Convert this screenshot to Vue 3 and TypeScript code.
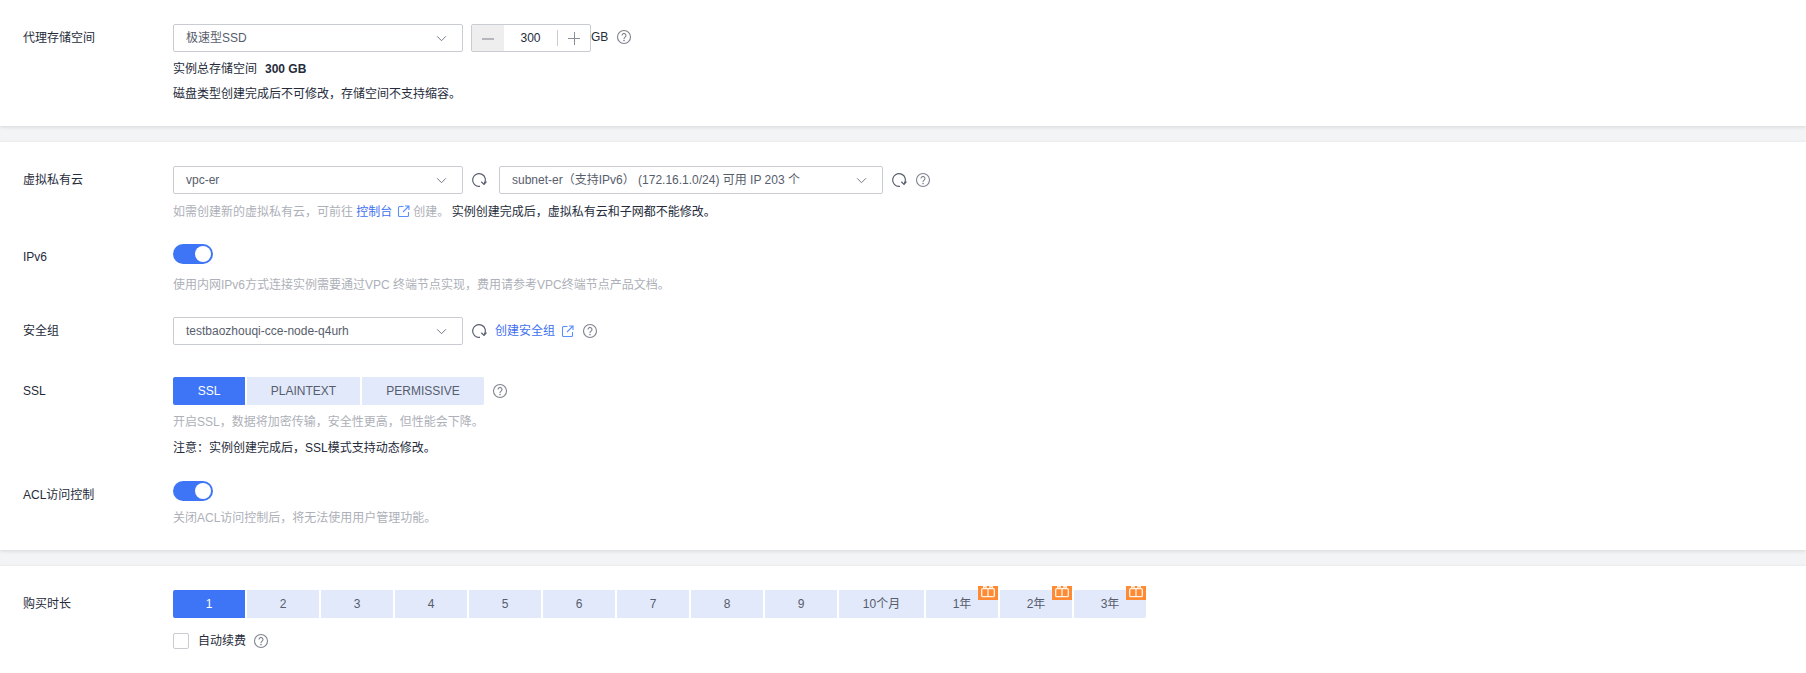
<script setup lang="ts">
interface Term {
  label: string
  gift?: boolean
  wide?: boolean
}

const sslModes = ['SSL', 'PLAINTEXT', 'PERMISSIVE']

const terms: Term[] = [
  ...['1', '2', '3', '4', '5', '6', '7', '8', '9'].map((label) => ({ label })),
  { label: '10个月', wide: true },
  { label: '1年', gift: true },
  { label: '2年', gift: true },
  { label: '3年', gift: true }
]
</script>

<template>
  <div class="page">
    <section class="card card-storage">
      <div class="row">
        <div class="label">代理存储空间</div>
        <div class="body">
          <div class="line">
            <div class="select">
              <span>极速型SSD</span>
              <svg class="chevron" viewBox="0 0 12 8"><path d="M1 1.5 6 6.5 11 1.5" /></svg>
            </div>
            <div class="stepper">
              <span class="step step-off"><i class="dash"></i></span>
              <span class="step-value">300</span>
              <span class="step"><i class="dash"></i><i class="bar"></i></span>
            </div>
            <span class="unit">GB</span>
            <svg class="help help-storage" viewBox="0 0 16 16">
              <circle cx="8" cy="8" r="6.5" />
              <path d="M6 6.4a2 2 0 1 1 3.1 1.7C8.4 8.6 8 9 8 9.9" />
              <circle class="dot" cx="8" cy="11.6" r=".8" />
            </svg>
          </div>
          <p class="note note-total">实例总存储空间<b>300 GB</b></p>
          <p class="note note-disk">磁盘类型创建完成后不可修改，存储空间不支持缩容。</p>
        </div>
      </div>
    </section>

    <section class="card card-network">
      <div class="row">
        <div class="label">虚拟私有云</div>
        <div class="body">
          <div class="line">
            <div class="select">
              <span>vpc-er</span>
              <svg class="chevron" viewBox="0 0 12 8"><path d="M1 1.5 6 6.5 11 1.5" /></svg>
            </div>
            <svg class="refresh" viewBox="0 0 16 16">
              <path d="M9 14.3A6.4 6.4 0 1 1 13 12" />
              <path d="M10.3 9.8 13 12.4 15.4 9.5" />
            </svg>
            <div class="select select-subnet">
              <span>subnet-er（支持IPv6） (172.16.1.0/24) 可用 IP 203 个</span>
              <svg class="chevron" viewBox="0 0 12 8"><path d="M1 1.5 6 6.5 11 1.5" /></svg>
            </div>
            <svg class="refresh" viewBox="0 0 16 16">
              <path d="M9 14.3A6.4 6.4 0 1 1 13 12" />
              <path d="M10.3 9.8 13 12.4 15.4 9.5" />
            </svg>
            <svg class="help help-inline" viewBox="0 0 16 16">
              <circle cx="8" cy="8" r="6.5" />
              <path d="M6 6.4a2 2 0 1 1 3.1 1.7C8.4 8.6 8 9 8 9.9" />
              <circle class="dot" cx="8" cy="11.6" r=".8" />
            </svg>
          </div>
          <p class="tip tip-vpc">
            如需创建新的虚拟私有云，可前往 <a class="link">控制台</a>
            <svg class="external" viewBox="0 0 13 13">
              <path d="M6.5 1.5h-4a1 1 0 0 0-1 1v8a1 1 0 0 0 1 1h8a1 1 0 0 0 1-1V7" />
              <path d="M8 1h4v4M12 1 6 7" />
            </svg>创建。
            <span class="tip-dark">实例创建完成后，虚拟私有云和子网都不能修改。</span>
          </p>
        </div>
      </div>

      <div class="row row-ipv6">
        <div class="label">IPv6</div>
        <div class="body">
          <div class="switch"><i></i></div>
          <p class="tip tip-ipv6">使用内网IPv6方式连接实例需要通过VPC 终端节点实现，费用请参考VPC终端节点产品文档。</p>
        </div>
      </div>

      <div class="row row-security">
        <div class="label">安全组</div>
        <div class="body">
          <div class="line">
            <div class="select">
              <span>testbaozhouqi-cce-node-q4urh</span>
              <svg class="chevron" viewBox="0 0 12 8"><path d="M1 1.5 6 6.5 11 1.5" /></svg>
            </div>
            <svg class="refresh" viewBox="0 0 16 16">
              <path d="M9 14.3A6.4 6.4 0 1 1 13 12" />
              <path d="M10.3 9.8 13 12.4 15.4 9.5" />
            </svg>
            <a class="link link-create">创建安全组</a>
            <svg class="external external-create" viewBox="0 0 13 13">
              <path d="M6.5 1.5h-4a1 1 0 0 0-1 1v8a1 1 0 0 0 1 1h8a1 1 0 0 0 1-1V7" />
              <path d="M8 1h4v4M12 1 6 7" />
            </svg>
            <svg class="help help-inline" viewBox="0 0 16 16">
              <circle cx="8" cy="8" r="6.5" />
              <path d="M6 6.4a2 2 0 1 1 3.1 1.7C8.4 8.6 8 9 8 9.9" />
              <circle class="dot" cx="8" cy="11.6" r=".8" />
            </svg>
          </div>
        </div>
      </div>

      <div class="row row-ssl">
        <div class="label">SSL</div>
        <div class="body">
          <div class="line">
            <div class="tabs">
              <button
                v-for="(mode, i) in sslModes"
                :key="mode"
                class="tab"
                :class="[`tab-${mode.toLowerCase()}`, { active: i === 0 }]"
              >{{ mode }}</button>
            </div>
            <svg class="help help-inline" viewBox="0 0 16 16">
              <circle cx="8" cy="8" r="6.5" />
              <path d="M6 6.4a2 2 0 1 1 3.1 1.7C8.4 8.6 8 9 8 9.9" />
              <circle class="dot" cx="8" cy="11.6" r=".8" />
            </svg>
          </div>
          <p class="tip tip-ssl">开启SSL，数据将加密传输，安全性更高，但性能会下降。</p>
          <p class="tip tip-dark tip-note">注意：实例创建完成后，SSL模式支持动态修改。</p>
        </div>
      </div>

      <div class="row row-acl">
        <div class="label">ACL访问控制</div>
        <div class="body">
          <div class="switch"><i></i></div>
          <p class="tip tip-acl">关闭ACL访问控制后，将无法使用用户管理功能。</p>
        </div>
      </div>
    </section>

    <section class="card card-term">
      <div class="row">
        <div class="label">购买时长</div>
        <div class="body">
          <div class="tabs terms">
            <button
              v-for="(term, i) in terms"
              :key="term.label"
              class="tab term"
              :class="{ active: i === 0, 'term-wide': term.wide }"
            >
              {{ term.label }}
              <span v-if="term.gift" class="gift">
                <svg viewBox="0 0 20 14">
                  <rect x="3.7" y="2.7" width="12.6" height="8" rx="1" />
                  <path d="M10 2.7v8" />
                  <path d="M5.7 2.7V.5h2.400v2.200M11.900 2.700V.5h2.400v2.200" />
                </svg>
              </span>
            </button>
          </div>
          <div class="renew">
            <span class="checkbox"></span>
            <span>自动续费</span>
            <svg class="help help-renew" viewBox="0 0 16 16">
              <circle cx="8" cy="8" r="6.5" />
              <path d="M6 6.4a2 2 0 1 1 3.1 1.7C8.4 8.6 8 9 8 9.9" />
              <circle class="dot" cx="8" cy="11.6" r=".8" />
            </svg>
          </div>
        </div>
      </div>
    </section>
  </div>
</template>

<style>
html,
body {
  margin: 0;
  background: #f3f4f6;
}
</style>

<style scoped>
.page {
  width: 1806px;
  height: 673px;
  overflow: hidden;
  background: #f3f4f6;
  color: #252b3a;
  font: 12px/18px 'Liberation Sans', 'Noto Sans CJK SC', sans-serif;
}

.card {
  box-sizing: border-box;
  padding-top: 24px;
  background: #fff;
  box-shadow: 0 1px 4px rgba(0, 0, 0, 0.12);
}

.card-storage {
  height: 126px;
}

.card-network {
  height: 408px;
  margin-top: 16px;
}

.card-term {
  height: 107px;
  margin-top: 16px;
}

.row {
  display: flex;
}

.label {
  width: 150px;
  padding-left: 23px;
  line-height: 28px;
  flex: none;
}

.body {
  min-width: 0;
}

.line {
  display: flex;
  align-items: center;
  height: 28px;
}

.select {
  box-sizing: border-box;
  width: 290px;
  height: 28px;
  padding: 0 15px 0 12px;
  display: flex;
  align-items: center;
  justify-content: space-between;
  border: 1px solid #c9ccd1;
  border-radius: 2px;
  color: #575d6c;
  white-space: nowrap;
}

.select-subnet {
  width: 384px;
  margin-left: 12px;
}

.chevron {
  width: 11px;
  height: 7px;
  fill: none;
  stroke: #6d7280;
  stroke-width: 1.1;
}

.stepper {
  box-sizing: border-box;
  width: 120px;
  height: 28px;
  margin-left: 8px;
  display: flex;
  align-items: center;
  border: 1px solid #c9ccd1;
  border-radius: 2px;
  overflow: hidden;
}

.step {
  position: relative;
  width: 32px;
  height: 100%;
  flex: none;
}

.step-off {
  background: #eeeeee;
}

.step-value {
  flex: 1;
  height: 16px;
  line-height: 16px;
  text-align: center;
  border-right: 1px solid #c9ccd1;
}

.dash,
.bar {
  position: absolute;
  left: 10px;
  top: 13px;
  width: 12px;
  height: 1px;
  background: #8a8e99;
}

.step-off .dash {
  background: #b4b6bb;
  height: 2px;
}

.bar {
  left: 16px;
  top: 7px;
  width: 1px;
  height: 13px;
}

.unit {
  margin-top: -2px;
}

.help {
  flex: none;
  width: 16px;
  height: 16px;
  fill: none;
  stroke: #7f838e;
  stroke-width: 1.1;
}

.help .dot {
  fill: #7f838e;
  stroke: none;
}

.help-storage {
  margin-left: 8px;
  margin-top: -2px;
}

.help-inline {
  margin-left: 8px;
}

.help-renew {
  margin-left: 7px;
}

.refresh {
  flex: none;
  width: 16px;
  height: 16px;
  margin-left: 8px;
  fill: none;
  stroke: #575d6c;
  stroke-width: 1.2;
}

.note {
  margin: 0;
}

.note b {
  margin-left: 8px;
  font-weight: 700;
}

.note-total {
  margin-top: 8px;
}

.note-disk {
  margin-top: 7px;
}

.tip {
  margin: 9px 0 0;
  color: #adb0b8;
  white-space: nowrap;
}

.tip-dark {
  color: #252b3a;
}

.tip-vpc .tip-dark {
  margin-left: -1px;
}

.tip-ssl,
.tip-note {
  margin-top: 8px;
}

.tip-ipv6 {
  margin-top: 12px;
}

.tip-acl {
  margin-top: 8px;
}

.link {
  color: #3e6ff0;
}

.link-create {
  margin-left: 8px;
}

.external {
  width: 13px;
  height: 13px;
  margin: 0 3px 0 5px;
  vertical-align: -2px;
  fill: none;
  stroke: #5b8ff9;
  stroke-width: 1.1;
}

.external-create {
  flex: none;
  margin: 0 0 0 6px;
}

.switch {
  position: relative;
  width: 40px;
  height: 20px;
  border-radius: 10px;
  background: #3e75f6;
}

.switch i {
  position: absolute;
  top: 2px;
  right: 2px;
  width: 16px;
  height: 16px;
  border-radius: 50%;
  background: #fff;
}

.row-ipv6 {
  margin-top: 23px;
}

.row-ipv6 .label {
  line-height: 26px;
}

.row-security {
  margin-top: 23px;
}

.row-ssl {
  margin-top: 32px;
}

.row-acl {
  margin-top: 24px;
}

.tabs {
  display: flex;
  gap: 2px;
}

.tab {
  box-sizing: border-box;
  height: 28px;
  padding: 0;
  border: 0;
  background: #e2e9fb;
  color: #575d6c;
  font: inherit;
  position: relative;
}

.tab.active {
  background: #3e75f6;
  color: #fff;
}

.tabs .tab:first-child {
  border-radius: 2px 0 0 2px;
}

.tabs .tab:last-child {
  border-radius: 0 2px 2px 0;
}

.tab-ssl {
  width: 72px;
}

.tab-plaintext {
  width: 113px;
}

.tab-permissive {
  width: 122px;
}

.term {
  width: 72px;
}

.term-wide {
  width: 85px;
}

.gift {
  position: absolute;
  top: -4px;
  right: 0;
  width: 20px;
  height: 14px;
  display: block;
  background: #ff8a33;
}

.gift svg {
  display: block;
  width: 20px;
  height: 14px;
  fill: none;
  stroke: #fff3e6;
  stroke-width: 1.3;
}

.renew {
  display: flex;
  align-items: center;
  margin-top: 15px;
  height: 16px;
}

.checkbox {
  box-sizing: border-box;
  width: 16px;
  height: 16px;
  margin-right: 9px;
  border: 1px solid #c9ccd1;
  border-radius: 2px;
}
</style>
